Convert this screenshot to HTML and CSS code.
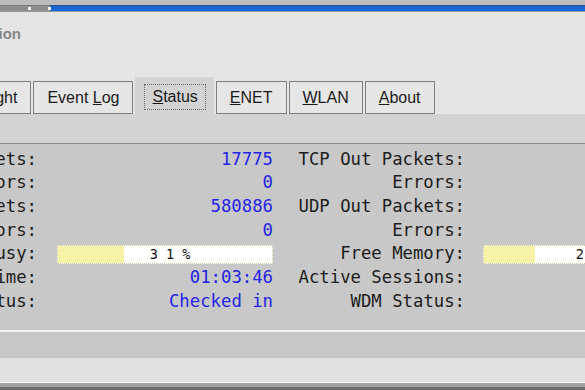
FILE: index.html
```html
<!DOCTYPE html>
<html lang="en">
<head>
    <meta charset="UTF-8">
    <title>System Information</title>
    <link rel="stylesheet" href="styles.css">
</head>
<body>
    <div class="window">
        <div class="titlebar">
            <div class="grip"><span class="speck s1"></span><span class="speck s2"></span></div>
            <div class="bluebar"></div>
        </div>

        <div class="head">
            <div class="title">System Information</div>
        </div>

        <div class="tabs">
            <div class="tab">General</div>
            <div class="tab">Copyright</div>
            <div class="tab">Event <u>L</u>og</div>
            <div class="tab active"><span class="focus"><u>S</u>tatus</span></div>
            <div class="tab"><u>E</u>NET</div>
            <div class="tab"><u>W</u>LAN</div>
            <div class="tab"><u>A</u>bout</div>
        </div>
        <div class="band"></div>

        <div class="panel">
            <div class="label">TCP In Packets:</div>
            <div class="value">17775</div>
            <div class="label label2">TCP Out Packets:</div>
            <div class="value">16204</div>

            <div class="label">Errors:</div>
            <div class="value">0</div>
            <div class="label label2">Errors:</div>
            <div class="value">0</div>

            <div class="label">UDP In Packets:</div>
            <div class="value">580886</div>
            <div class="label label2">UDP Out Packets:</div>
            <div class="value">3112</div>

            <div class="label">Errors:</div>
            <div class="value">0</div>
            <div class="label label2">Errors:</div>
            <div class="value">0</div>

            <div class="label">CPU Busy:</div>
            <div class="cell">
                <div class="bar"><div class="fill" style="width:31%"></div><span class="pct">3 1 %</span></div>
            </div>
            <div class="label label2">Free Memory:</div>
            <div class="cell">
                <div class="bar"><div class="fill" style="width:24%"></div><span class="pct">2 4 %</span></div>
            </div>

            <div class="label">Up Time:</div>
            <div class="value">01:03:46</div>
            <div class="label label2">Active Sessions:</div>
            <div class="value">1</div>

            <div class="label">Check-in Status:</div>
            <div class="value">Checked in</div>
            <div class="label label2">WDM Status:</div>
            <div class="value">Connected</div>
        </div>

        <div class="sep"></div>
        <div class="strip"></div>
        <div class="strip light"></div>
        <div class="bottom"></div>
    </div>
</body>
</html>
```

FILE: styles.css
```css
body {
    margin: 0;
    background: #e5e5e5;
    overflow: hidden;
    font-family: "Liberation Sans", Arial, sans-serif;
}

.window {
    width: 940px;
    margin-left: -200px;
}

/* title bar strip at the very top */
.titlebar {
    display: flex;
    height: 12px;
    border-top: 5px solid #bcbcbc;
    box-sizing: border-box;
    background: #9a9a9a;
}

.grip {
    width: 250px;
    height: 5px;
    border-top: 1px solid #7a7a7a;
    background: #8e8e8e;
    position: relative;
}

.speck {
    position: absolute;
    top: 1px;
    width: 3px;
    height: 3px;
    background: #f0f0f0;
}

.s1 { left: 228px; }
.s2 { left: 248px; }

.bluebar {
    flex: 1;
    height: 5px;
    border-top: 1px solid #2a4f9a;
    background: #1866d6;
}

.head {
    height: 65px;
    background: #e5e5e5;
}

.title {
    width: 221px;
    text-align: right;
    padding-top: 13px;
    font-size: 15px;
    font-weight: bold;
    color: #878787;
    white-space: nowrap;
}

/* tabs */
.tabs {
    display: flex;
    align-items: flex-end;
    gap: 2px;
    height: 37px;
    padding-left: 48px;
    background: #e5e5e5;
}

.tab {
    height: 33px;
    box-sizing: border-box;
    padding: 0 13px;
    border: 1px solid #7e7e7e;
    background: #e6e6e6;
    font-size: 16px;
    line-height: 31px;
    color: #1a1a1a;
    white-space: nowrap;
}

.tab.active {
    height: 37px;
    border: none;
    padding: 7px 8px 0 9px;
    background: #d3d3d3;
}

.focus {
    display: block;
    padding: 0 7px;
    border: 1px dotted #6a6a6a;
    line-height: 24px;
}

.band {
    height: 29px;
    background: #d3d3d3;
}

/* status grid */
.panel {
    display: grid;
    grid-template-columns: 257px 216px 210px 216px;
    grid-auto-rows: 23.7px;
    align-items: center;
    padding: 3.5px 0 16.5px;
    border-top: 1px solid #8a8a8a;
    background: #c8c8c8;
    font-family: "DejaVu Sans Mono", monospace;
    font-size: 17.3px;
    line-height: 23.7px;
}

.label {
    text-align: right;
    padding-right: 20px;
    color: #1c1c1c;
    white-space: nowrap;
}

.label2 {
    padding-right: 18px;
}

.value {
    text-align: right;
    color: #2424e6;
    white-space: nowrap;
}

.bar {
    position: relative;
    height: 19px;
    box-sizing: border-box;
    border: 1px dotted #c9c9a0;
    background: #fff;
}

.fill {
    height: 100%;
    background: #f6f3a6;
}

.pct {
    position: absolute;
    top: 0;
    left: 10px;
    right: 0;
    text-align: center;
    font-size: 13.5px;
    line-height: 17px;
    color: #111;
}

.sep {
    height: 2px;
    background: #f2f2f2;
}

.strip {
    height: 26px;
    background: #c7c7c7;
}

.strip.light {
    height: 24px;
    background: #e0e0e0;
}

.bottom {
    height: 4px;
    border-top: 1px solid #f6f6f6;
    border-bottom: 3px solid #6e6e6e;
    background: #a2a2a2;
}
```
